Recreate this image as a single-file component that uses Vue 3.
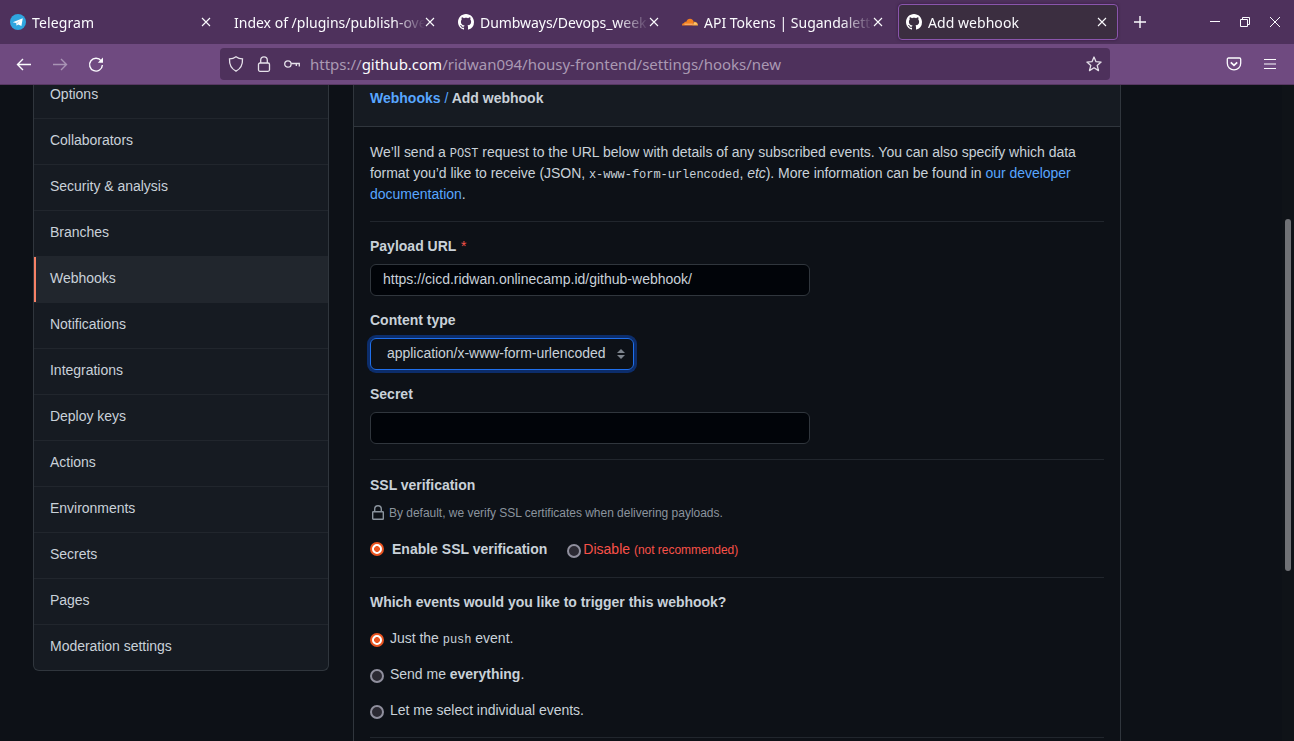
<script setup>
const tabs = [
  { icon: 'telegram', title: 'Telegram', cls: 't1' },
  { icon: '', title: 'Index of /plugins/publish-over', cls: 't2' },
  { icon: 'github', title: 'Dumbways/Devops_week', cls: 't3' },
  { icon: 'cloudflare', title: 'API Tokens | Sugandalette', cls: 't4' },
  { icon: 'github', title: 'Add webhook', cls: 't5', active: true },
]
const menu = [
  'Options', 'Collaborators', 'Security & analysis', 'Branches', 'Webhooks', 'Notifications',
  'Integrations', 'Deploy keys', 'Actions', 'Environments', 'Secrets', 'Pages', 'Moderation settings',
]
</script>

<template>
  <div class="window">
    <header class="tabbar">
      <div v-for="t in tabs" :key="t.title" class="tab" :class="[t.cls, { active: t.active }]">
        <svg v-if="t.icon === 'telegram'" class="fav" viewBox="0 0 16 16">
          <circle cx="8" cy="8" r="8" fill="#2fa5df" />
          <path d="M2.800 8.200 12.800 4.200 11.400 11.900 8.300 10.400 6.700 11.600 6 9.100z" fill="#fff" />
          <path d="M6.600 11.900 6 9.100l4.400-2.900-3.200 3.600z" fill="#b5dcf2" />
        </svg>
        <svg v-else-if="t.icon === 'github'" class="fav" viewBox="0 0 16 16">
          <path fill="#fff" fill-rule="evenodd" d="M8 0C3.580 0 0 3.580 0 8c0 3.540 2.290 6.530 5.470 7.590.4.070.55-.17.55-.38 0-.19-.01-.82-.01-1.490-2.010.37-2.530-.49-2.690-.94-.09-.23-.48-.94-.82-1.130-.28-.15-.68-.52-.01-.53.63-.01 1.080.58 1.230.82.72 1.210 1.870.87 2.330.66.07-.52.28-.87.51-1.070-1.780-.2-3.640-.89-3.640-3.950 0-.87.31-1.590.82-2.150-.08-.2-.36-1.020.08-2.120 0 0 .67-.21 2.200.82.64-.18 1.320-.27 2-.27s1.360.09 2 .27c1.530-1.040 2.200-.82 2.200-.82.44 1.100.16 1.920.08 2.120.51.56.82 1.270.82 2.150 0 3.070-1.870 3.750-3.650 3.950.29.25.54.73.54 1.480 0 1.070-.01 1.930-.01 2.200 0 .21.15.46.55.38A8.010 8.010 0 0 0 16 8c0-4.420-3.580-8-8-8z" />
        </svg>
        <svg v-else-if="t.icon === 'cloudflare'" class="fav" viewBox="0 0 16 16">
          <path d="M0 11.400c0-1.500 1-2.300 2.200-2.300-.1-1 1-1.700 1.900-1.100C4.800 5.900 6.300 4.700 8 4.700c2 0 3.400 1.400 3.800 3.200l-.9 3.500z" fill="#f38020" />
          <path d="M10.600 11.400 12.100 7.700c2.300-.1 3.900 1.400 3.900 3.700z" fill="#faae40" />
          <path d="M2.500 10.200h8.200M11.700 9.800h3" stroke="#ffe4c4" stroke-width=".6" />
        </svg>
        <span class="tab-title"><span>{{ t.title }}</span></span>
        <svg class="x" viewBox="0 0 10 10"><path d="M1 1l8 8M9 1L1 9" /></svg>
      </div>
      <svg class="plus" viewBox="0 0 12 12"><path d="M6 0v12M0 6h12" /></svg>
      <div class="controls">
        <svg viewBox="0 0 10 10"><path d="M0 4.500h10" /></svg>
        <svg viewBox="0 0 10 10"><path d="M.5 2.500h7v7h-7zM2.500 2.500v-2h7v7h-2" /></svg>
        <svg viewBox="0 0 10 10"><path d="M0 0l10 10M10 0L0 10" /></svg>
      </div>
    </header>

    <nav class="toolbar">
      <svg class="tool" viewBox="0 0 16 16"><path d="M15 8.500H1.500M7 3 1.500 8.500 7 14" /></svg>
      <svg class="tool dim" viewBox="0 0 16 16"><path d="M1 8.500h13.500M9 3l5.500 5.500L9 14" /></svg>
      <svg class="tool" viewBox="0 0 16 16"><path d="M13.200 4.900A6.400 6.400 0 1 0 14.400 9" /><path d="M15 1.500v5.200H9.800z" fill="#fbfbfe" stroke="none" /></svg>
      <div class="urlbar">
        <svg class="ui" viewBox="0 0 16 16"><path d="M8 .8c2 1.500 4 2.100 6.500 2.100.3 6-2 10-6.500 12.300C3.500 12.900 1.200 8.900 1.500 2.900 4 2.900 6 2.300 8 .8z" /></svg>
        <svg class="ui" viewBox="0 0 16 16"><rect x="2.500" y="7" width="11" height="8.300" rx="1.500" /><path d="M4.700 7V4.200a3.300 3.300 0 0 1 6.600 0V7" /></svg>
        <svg class="ui" viewBox="0 0 16 16"><circle cx="3.900" cy="8" r="3.200" /><path d="M7.100 7.500h8.200v3M12.300 7.500v2.500" /></svg>
        <span class="url">https://<b>github.com</b>/ridwan094/housy-frontend/settings/hooks/new</span>
        <svg class="ui star" viewBox="0 0 16 16"><path stroke-linejoin="round" d="M8 1l2 4.700 5.100.4-3.900 3.300 1.300 5.200L8 11.800l-4.500 2.800 1.300-5.200L.9 6.100 6 5.700z" /></svg>
      </div>
      <svg class="pocket" viewBox="0 0 16 16"><path d="M2.500 2h11c.7 0 1.200.5 1.200 1.200v4a6.700 6.700 0 0 1-13.400 0v-4C1.300 2.500 1.800 2 2.500 2z" /><path d="M4.800 6.300 8 9.400l3.200-3.100" stroke-width="1.700" /></svg>
      <svg class="burger" viewBox="0 0 12 12"><path d="M0 1.500h12M0 6h12M0 10.500h12" /></svg>
    </nav>

    <div class="page">
      <aside class="menu">
        <a v-for="m in menu" :key="m" class="menu-item" :class="{ current: m === 'Webhooks' }">{{ m }}</a>
      </aside>

      <main class="panel">
        <h2 class="crumb"><a>Webhooks</a> <i>/</i> <span>Add webhook</span></h2>
        <div class="body">
          <p class="intro">
            <span class="l1">We’ll send a <code>POST</code> request to the URL below with details of any subscribed events. You can also specify which data</span><br>
            <span class="l2">format you’d like to receive (JSON, <code>x-www-form-urlencoded</code>, <em>etc</em>). More information can be found in <a>our developer</a></span><br>
            <a>documentation</a>.
          </p>
          <hr class="h1">
          <label class="label">Payload URL <span class="req">*</span></label>
          <div class="input">https://cicd.ridwan.onlinecamp.id/github-webhook/</div>
          <label class="label">Content type</label>
          <div class="select">
            <span>application/x-www-form-urlencoded</span>
            <svg viewBox="0 0 8 10"><path d="M0 4 4 0l4 4zM0 6l4 4 4-4z" fill="#7d848d" /></svg>
          </div>
          <label class="label">Secret</label>
          <div class="input"></div>
          <hr class="h2">
          <h3 class="heading">SSL verification</h3>
          <p class="note">
            <svg viewBox="0 0 16 16"><rect x="2.700" y="6.700" width="10.600" height="7.600" rx=".6" /><path d="M4.700 6.700V4a3.300 3.300 0 0 1 6.600 0v2.700" /></svg>
            <span>By default, we verify SSL certificates when delivering payloads.</span>
          </p>
          <div class="ssl">
            <i class="radio on"></i><b class="enable">Enable SSL verification</b>
            <i class="radio low"></i><span class="danger">Disable <small>(not recommended)</small></span>
          </div>
          <hr class="h3">
          <h3 class="heading which">Which events would you like to trigger this webhook?</h3>
          <div class="choices">
            <div class="choice"><i class="radio on"></i><span>Just the <code>push</code> event.</span></div>
            <div class="choice"><i class="radio"></i><span>Send me <b>everything</b>.</span></div>
            <div class="choice"><i class="radio"></i><span>Let me select individual events.</span></div>
          </div>
          <hr class="h4">
        </div>
      </main>
      <div class="scroll"><div class="thumb"></div></div>
    </div>
  </div>
</template>

<style>
html, body { background: #0d1117; overflow: hidden; }
</style>

<style scoped>
* { box-sizing: border-box; }
.window { width: 1294px; height: 741px; overflow: hidden; display: flex; flex-direction: column; font-family: "Liberation Sans", Arial, sans-serif; font-size: 14px; line-height: 21px; color: #c9d1d9; background: #0d1117; }
svg { display: block; flex: none; fill: none; stroke: #fbfbfe; overflow: visible; }
.fav { stroke: none; }
.tabbar { height: 44px; flex: none; background: #4e315c; display: flex; align-items: center; gap: 4px; padding-left: 2px; font-family: "Noto Sans", sans-serif; font-size: 14px; color: #fbfbfe; }
.tab { width: 220px; height: 36px; flex: none; border: 1px solid transparent; border-radius: 4px; display: flex; align-items: center; padding: 0 10px 0 7px; }
.tab.active { background: #3b2e40; border-color: #8a55ac; box-shadow: 0 0 3px rgba(30, 10, 40, .5); }
.fav { width: 16px; height: 16px; margin-right: 6px; }
.tab-title { flex: 1; min-width: 0; white-space: nowrap; -webkit-mask-image: linear-gradient(to left, transparent 0, #000 32px); mask-image: linear-gradient(to left, transparent 0, #000 32px); }
.t1 .tab-title { letter-spacing: .12px; }
.t3 .tab-title { letter-spacing: -.05px; }
.t5 .tab-title { letter-spacing: .05px; }
.x { width: 10px; height: 10px; stroke-width: 1.1; }
.plus { width: 12px; height: 12px; margin-left: 12px; stroke-width: 1.4; }
.controls { display: flex; gap: 20px; margin-left: auto; padding-right: 14px; }
.controls svg { width: 10px; height: 10px; stroke-width: 1; }

.toolbar { height: 41px; flex: none; background: #6f4a80; border-bottom: 1px solid #573863; display: flex; align-items: center; padding-left: 16px; }
.tool { width: 16px; height: 16px; margin-right: 20px; stroke-width: 1.4; }
.tool.dim { opacity: .42; }
.urlbar { width: 890px; height: 32px; margin-left: 96px; border-radius: 4px; background: #4e315c; display: flex; align-items: center; padding: 0 8px; font-family: "Noto Sans", sans-serif; font-size: 15px; color: #aa99b3; }
.ui { width: 16px; height: 16px; margin-right: 12px; stroke-width: 1.3; stroke: #e6e1ea; }
.url { white-space: nowrap; margin-left: -2px; letter-spacing: -.01px; }
.url b { font-weight: 400; color: #fbfbfe; }
.star { margin: 0 0 0 auto; }
.pocket { width: 16px; height: 16px; margin-left: 116px; stroke-width: 1.3; }
.burger { width: 12px; height: 12px; margin-left: 22px; stroke-width: 1.2; }

.page { flex: 1; min-height: 0; overflow: hidden; display: flex; align-items: flex-start; padding-left: 33px; }
.menu { width: 296px; margin-top: -12px; border: 1px solid #30363d; border-top: 0; border-radius: 6px; overflow: hidden; background: #161b22; flex: none; }
.menu-item { display: flex; align-items: center; height: 46px; padding: 0 0 3px 16px; border-bottom: 1px solid #21262d; letter-spacing: -.02px; }
.menu-item:last-child { height: 45px; border-bottom: 0; padding-bottom: 3px; }
.menu-item.current { background: #21262d; box-shadow: inset 2px 0 #f78166; }
.panel { width: 768px; height: 660px; margin-left: 24px; border: 1px solid #30363d; border-top: 0; flex: none; }
.crumb { margin: 0; height: 42px; padding: 3px 16px 0; font-size: 14px; line-height: 21px; background: #161b22; border-bottom: 1px solid #30363d; }
.crumb i { font-style: normal; font-weight: 400; color: #58a6ff; }
a { color: inherit; }
.crumb a, .intro a { color: #58a6ff; }
.body { padding: 15px 16px 0; }
.intro { margin: 0; height: 63px; white-space: nowrap; }
.l1 { letter-spacing: -.014px; }
.l2 { letter-spacing: -.035px; }
code { font-family: "Liberation Mono", monospace; font-size: 12px; line-height: 0; }
hr { border: 0; height: 1px; background: #21262d; margin: 0; }
.h1 { margin-top: 16px; }
.label { display: block; height: 42px; padding-top: 14px; font-weight: 700; }
.req { color: #f85149; margin-left: 1px; font-weight: 400; }
.input { width: 440px; height: 32px; border: 1px solid #30363d; border-radius: 6px; background: #010409; padding: 4px 12px; }
.select { width: 264px; height: 32px; border: 1px solid #1f6feb; border-radius: 6px; box-shadow: 0 0 0 3px #0c2d6b; padding: 0 8px 0 16px; display: flex; align-items: center; justify-content: space-between; }
.select span { padding-bottom: 1px; white-space: nowrap; letter-spacing: -.03px; }
.select svg { width: 8px; height: 10px; stroke: none; }
.h2 { margin-top: 15px; }
.heading { margin: 15px 0 0; font-size: 14px; line-height: 21px; letter-spacing: -.02px; }
.heading.which { margin-top: 14px; letter-spacing: -.03px; }
.note { margin: 7px 0 0; height: 21px; display: flex; align-items: center; gap: 3px; font-size: 12px; color: #8b949e; letter-spacing: -.02px; }
.note svg { width: 16px; height: 16px; margin-top: -1px; stroke: #8b949e; stroke-width: 1.4; }
.ssl { margin-top: 14px; height: 21px; display: flex; align-items: center; }
.radio { width: 14px; height: 14px; border-radius: 50%; border: 2px solid #8f8f9d; background: #2b2a33; flex: none; }
.radio.on { border-color: #e95420; background: radial-gradient(circle at center, #e95420 0 2.600px, #fff 3.200px); }
.enable { margin: 1px 20px 0 8px; }
.low { margin: 4px 2px 0 0; }
.danger { color: #f85149; white-space: nowrap; margin-top: 1px; }
.danger small { font-size: 12px; line-height: 0; letter-spacing: -.03px; }
.h3 { margin-top: 18px; }
.choices { margin-top: 15px; display: flex; flex-direction: column; gap: 15px; }
.choice { display: flex; height: 21px; align-items: center; gap: 6px; letter-spacing: -.02px; }
.choice .radio { margin-top: 3px; }
.h4 { margin-top: 16px; }
.scroll { margin-left: auto; width: 12px; height: 656px; padding: 134px 3px 0; background: #0f1318; }
.thumb { height: 352px; border-radius: 3px; background: #707276; }
</style>
